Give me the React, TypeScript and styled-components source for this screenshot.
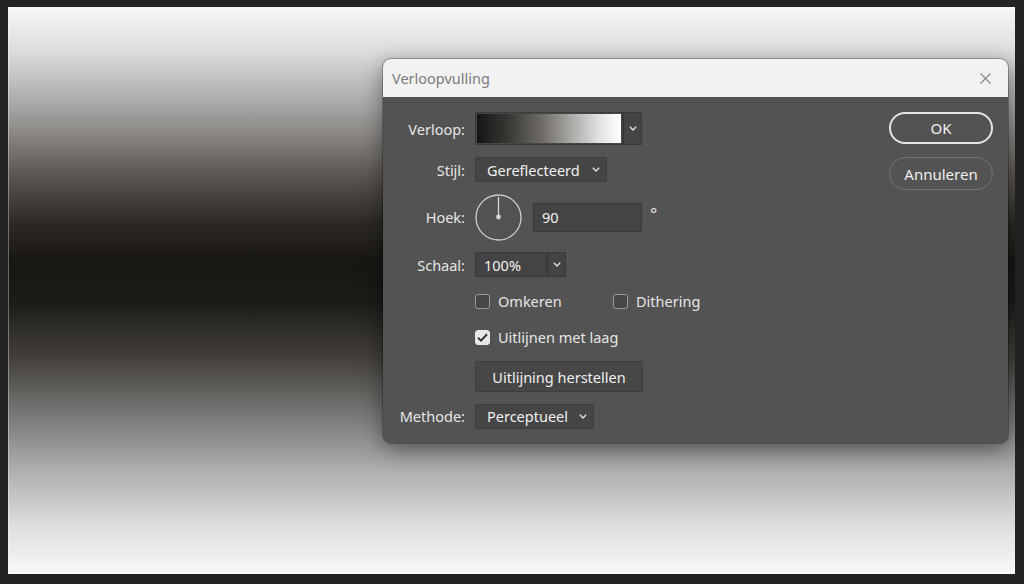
import React from "react";
import styled, { createGlobalStyle } from "styled-components";

const Global = createGlobalStyle`
  html, body { margin: 0; padding: 0; background: #242424; }
  * { box-sizing: border-box; }
`;

const Page = styled.div`
  width: 1024px;
  height: 584px;
  padding: 7px 9px 10px 8px;
  background: #242424;
  font-family: "Noto Sans", "Open Sans", sans-serif;
`;

const Canvas = styled.div`
  position: relative;
  width: 100%;
  height: 100%;
  background: linear-gradient(
    to bottom,
    #f7f7f7 0%,
    #dcdcdc 8%,
    #a5a3a1 18%,
    #585450 30%,
    #2d2a26 38%,
    #181613 45%,
    #1d1b18 52%,
    #43403c 62%,
    #797876 72%,
    #b0b0b0 82%,
    #e0e0e0 92%,
    #f8f8f8 100%
  );
  box-shadow: inset 1px 0 0 rgba(255, 255, 255, 0.35), inset 0 -1px 0 rgba(255, 255, 255, 0.5);
`;

const Dialog = styled.div`
  position: absolute;
  left: 375px;
  top: 52px;
  width: 625px;
  height: 384px;
  border-radius: 8px;
  overflow: hidden;
  background: #535353;
  box-shadow: 0 6px 22px rgba(0, 0, 0, 0.45), 0 0 0 1px rgba(0, 0, 0, 0.25);
  display: flex;
  flex-direction: column;
`;

const TitleBar = styled.div`
  height: 38px;
  background: #f2f2f2;
  display: flex;
  align-items: center;
  justify-content: space-between;
  padding: 0 17px 0 9px;
  flex-shrink: 0;
`;

const Title = styled.span`
  font-size: 14.5px;
  color: #7c7c7c;
`;

const CloseIcon = styled.svg`
  width: 11px;
  height: 11px;
  stroke: #8a8a8a;
  stroke-width: 1.2;
`;

const Body = styled.div`
  flex: 1;
  display: flex;
  justify-content: space-between;
  padding: 15px 15px 14px 16px;
`;

const Form = styled.div`
  display: grid;
  grid-template-columns: 66px auto;
  column-gap: 10px;
  row-gap: 12px;
  grid-template-rows: 33px 25px 46px 25px 24px 24px 31px 24px;
  align-items: center;
`;

const Label = styled.label`
  grid-column: 1;
  justify-self: end;
  font-size: 14.5px;
  color: #e6e6e6;
  white-space: nowrap;
`;

const Control = styled.div<{ $gap?: number }>`
  grid-column: 2;
  display: flex;
  align-items: center;
  gap: ${(p) => p.$gap ?? 0}px;
`;

const Swatch = styled.div`
  width: 148px;
  height: 33px;
  border: 1px solid #3b3b3b;
  padding: 1px;
  background: #474747;
`;

const SwatchFill = styled.div`
  width: 100%;
  height: 100%;
  background: linear-gradient(to right, #161513 0%, #3a3835 22%, #6e6b67 45%, #a9a7a4 65%, #e2e2e2 85%, #ffffff 100%);
`;

const ArrowBox = styled.div<{ $h: number }>`
  width: 19px;
  height: ${(p) => p.$h}px;
  background: #444444;
  border: 1px solid #3a3a3a;
  border-left: 1px solid #383838;
  display: flex;
  align-items: center;
  justify-content: center;
`;

const Chevron = styled.svg`
  width: 8px;
  height: 5px;
  fill: none;
  stroke: #e0e0e0;
  stroke-width: 1.4;
`;

const Select = styled.div<{ $w: number }>`
  width: ${(p) => p.$w}px;
  height: 25px;
  background: #454545;
  border: 1px solid #3d3d3d;
  border-radius: 2px;
  display: flex;
  align-items: center;
  justify-content: space-between;
  padding: 0 6px 0 11px;
  font-size: 14.5px;
  color: #f0f0f0;
`;

const Input = styled.div<{ $w: number; $h: number }>`
  width: ${(p) => p.$w}px;
  height: ${(p) => p.$h}px;
  background: #444444;
  border: 1px solid #3a3a3a;
  display: flex;
  align-items: center;
  padding-left: 8px;
  font-size: 14.5px;
  color: #f2f2f2;
`;

const Dial = styled.svg`
  width: 47px;
  height: 47px;
`;

const Degree = styled.span`
  align-self: flex-start;
  margin-top: 10px;
  margin-left: -3px;
  font-size: 17px;
  line-height: 20px;
  color: #e0e0e0;
`;

const CheckRow = styled.label<{ $w?: number }>`
  display: flex;
  align-items: center;
  gap: 8px;
  width: ${(p) => (p.$w ? `${p.$w}px` : "auto")};
  font-size: 14.5px;
  color: #e6e6e6;
`;

const Box = styled.span<{ $on?: boolean }>`
  width: 15px;
  height: 15px;
  border-radius: 3px;
  border: 1px solid ${(p) => (p.$on ? "#e8e8e8" : "#9a9a9a")};
  background: ${(p) => (p.$on ? "#e8e8e8" : "#474747")};
  display: flex;
  align-items: center;
  justify-content: center;
`;

const Button = styled.div`
  width: 168px;
  height: 31px;
  background: #474747;
  border: 1px solid #3e3e3e;
  border-radius: 2px;
  display: flex;
  align-items: center;
  justify-content: center;
  font-size: 14.5px;
  color: #f0f0f0;
`;

const Side = styled.div`
  display: flex;
  flex-direction: column;
  gap: 13px;
`;

const Pill = styled.div<{ $primary?: boolean }>`
  width: 104px;
  height: ${(p) => (p.$primary ? 32 : 33)}px;
  border-radius: 17px;
  border: ${(p) => (p.$primary ? "2px solid #e4e4e4" : "1.5px solid #737373")};
  display: flex;
  align-items: center;
  justify-content: center;
  font-size: 15px;
  color: #f0f0f0;
`;

const Down = () => (
  <Chevron viewBox="0 0 8 5">
    <polyline points="0.8,0.8 4,4 7.2,0.8" />
  </Chevron>
);

export default function App() {
  return (
    <>
      <Global />
      <Page>
        <Canvas>
          <Dialog>
            <TitleBar>
              <Title>Verloopvulling</Title>
              <CloseIcon viewBox="0 0 11 11">
                <line x1="0.5" y1="0.5" x2="10.5" y2="10.5" />
                <line x1="10.5" y1="0.5" x2="0.5" y2="10.5" />
              </CloseIcon>
            </TitleBar>
            <Body>
              <Form>
                <Label>Verloop:</Label>
                <Control>
                  <Swatch>
                    <SwatchFill />
                  </Swatch>
                  <ArrowBox $h={33}>
                    <Down />
                  </ArrowBox>
                </Control>

                <Label>Stijl:</Label>
                <Control>
                  <Select $w={132}>
                    Gereflecteerd
                    <Down />
                  </Select>
                </Control>

                <Label>Hoek:</Label>
                <Control $gap={11}>
                  <Dial viewBox="0 0 47 47">
                    <circle cx="23.5" cy="23.5" r="22.5" fill="none" stroke="#cfcfcf" strokeWidth="1.3" />
                    <line x1="23.5" y1="3" x2="23.5" y2="22" stroke="#d6d6d6" strokeWidth="1.3" />
                    <circle cx="23.5" cy="23" r="2.4" fill="#d6d6d6" />
                  </Dial>
                  <Input $w={109} $h={29}>90</Input>
                  <Degree>°</Degree>
                </Control>

                <Label>Schaal:</Label>
                <Control>
                  <Input $w={72} $h={25}>100%</Input>
                  <ArrowBox $h={25}>
                    <Down />
                  </ArrowBox>
                </Control>

                <Control>
                  <CheckRow $w={138}>
                    <Box />
                    Omkeren
                  </CheckRow>
                  <CheckRow>
                    <Box />
                    Dithering
                  </CheckRow>
                </Control>

                <Control>
                  <CheckRow>
                    <Box $on>
                      <svg width="11" height="9" viewBox="0 0 11 9">
                        <polyline points="1,4.6 4,7.6 10,1.2" fill="none" stroke="#333" strokeWidth="2" />
                      </svg>
                    </Box>
                    Uitlijnen met laag
                  </CheckRow>
                </Control>

                <Control>
                  <Button>Uitlijning herstellen</Button>
                </Control>

                <Label>Methode:</Label>
                <Control>
                  <Select $w={119}>
                    Perceptueel
                    <Down />
                  </Select>
                </Control>
              </Form>
              <Side>
                <Pill $primary>OK</Pill>
                <Pill>Annuleren</Pill>
              </Side>
            </Body>
          </Dialog>
        </Canvas>
      </Page>
    </>
  );
}
